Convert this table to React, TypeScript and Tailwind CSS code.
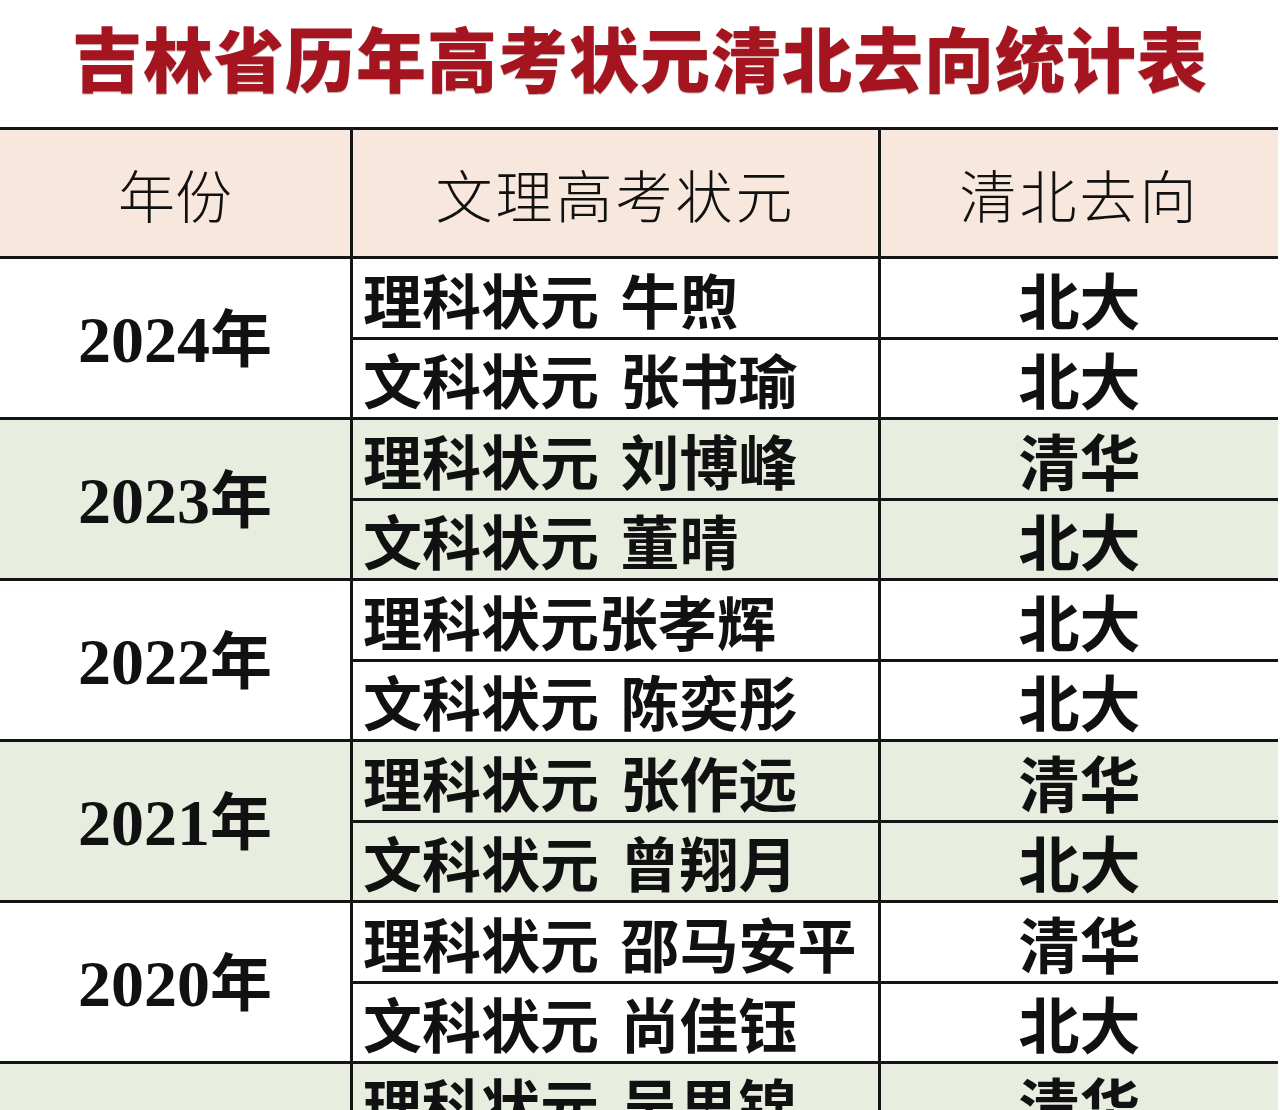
import React from "react";

type Group = { year: string; rows: { a: string; b: string }[] };

const groups: Group[] = [
  { year: "2024", rows: [{ a: "理科状元 牛煦", b: "北大" }, { a: "文科状元 张书瑜", b: "北大" }] },
  { year: "2023", rows: [{ a: "理科状元 刘博峰", b: "清华" }, { a: "文科状元 董晴", b: "北大" }] },
  { year: "2022", rows: [{ a: "理科状元张孝辉", b: "北大" }, { a: "文科状元 陈奕彤", b: "北大" }] },
  { year: "2021", rows: [{ a: "理科状元 张作远", b: "清华" }, { a: "文科状元 曾翔月", b: "北大" }] },
  { year: "2020", rows: [{ a: "理科状元 邵马安平", b: "清华" }, { a: "文科状元 尚佳钰", b: "北大" }] },
  { year: "2019", rows: [{ a: "理科状元 吴思锦", b: "清华" }, { a: "文科状元 王一", b: "北大" }] },
];

const sans = { fontFamily: '"Noto Sans CJK SC", "Noto Sans", sans-serif' };

export default function App() {
  return (
    <div className="w-[1280px] h-[1110px] overflow-hidden bg-white" style={sans}>
      <div className="h-[127px] flex items-center justify-center">
        <h1
          className="text-[70px] leading-none font-black text-[#a51520] tracking-[1px] mt-[-14px]"
          style={{ fontFamily: '"Noto Sans CJK SC", sans-serif', textShadow: "0 1px 1px rgba(80,0,0,0.35)" }}
        >
          吉林省历年高考状元清北去向统计表
        </h1>
      </div>
      <div className="w-[1278px] bg-[#151515] pt-[3px] pr-[3px] grid grid-cols-[350px_525px_397px] gap-[3px]">
        <div className="h-[126px] bg-[#f7e7dc] flex items-center justify-center text-[57px] font-light text-[#111] pt-[2px]">
          年份
        </div>
        <div className="h-[126px] bg-[#f7e7dc] flex items-center justify-center text-[57px] font-light text-[#111] pt-[2px] tracking-[3px]">
          文理高考状元
        </div>
        <div className="h-[126px] bg-[#f7e7dc] flex items-center justify-center text-[57px] font-light text-[#111] pt-[2px] tracking-[3px]">
          清北去向
        </div>
        {groups.map((g, gi) => {
          const bg = gi % 2 === 0 ? "bg-white" : "bg-[#e7eddf]";
          return (
            <React.Fragment key={g.year}>
              <div className={`row-span-2 ${bg} flex items-center justify-center text-[#111] font-bold`}>
                <span className="text-[66px] leading-none" style={{ fontFamily: '"Liberation Serif", "Noto Sans CJK SC", serif' }}>
                  {g.year}
                  <span style={{ fontFamily: '"Noto Sans CJK SC", sans-serif' }} className="text-[62px]">年</span>
                </span>
              </div>
              {g.rows.map((r, ri) => (
                <React.Fragment key={ri}>
                  <div
                    className={`${ri === 0 ? "h-[78px]" : "h-[77px]"} ${bg} flex items-center pl-[10px] text-[59px] font-bold text-[#111] whitespace-pre leading-none [word-spacing:8px]`}
                  >
                    {r.a}
                  </div>
                  <div
                    className={`${ri === 0 ? "h-[78px]" : "h-[77px]"} ${bg} flex items-center justify-center text-[61px] font-bold text-[#111] leading-none`}
                  >
                    {r.b}
                  </div>
                </React.Fragment>
              ))}
            </React.Fragment>
          );
        })}
      </div>
    </div>
  );
}
